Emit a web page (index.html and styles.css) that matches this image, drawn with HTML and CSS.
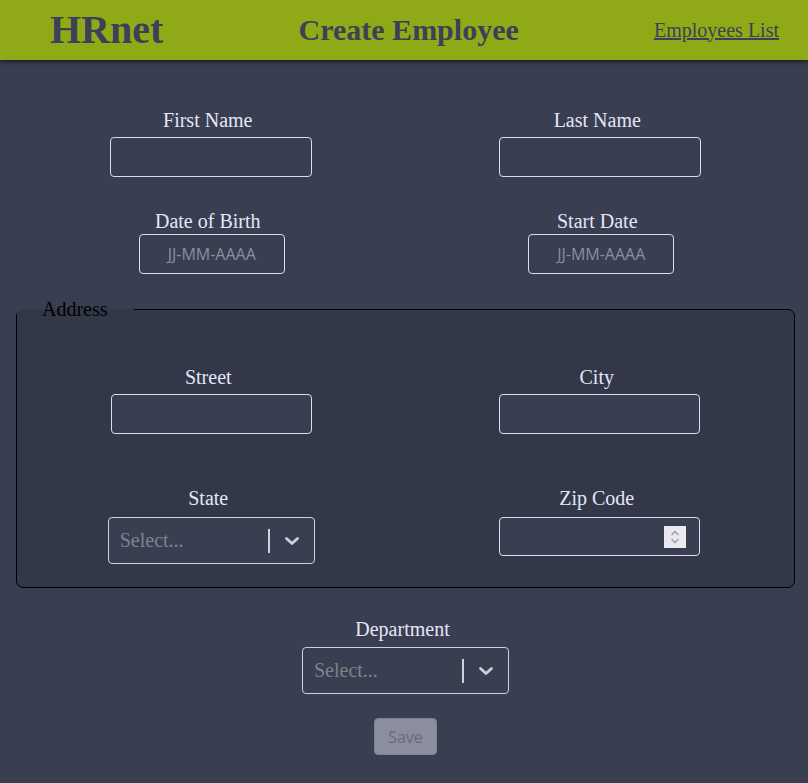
FILE: index.html
```html
<!DOCTYPE html>
<html lang="fr">
<head>
<meta charset="utf-8">
<title>HRnet - Create Employee</title>
<link rel="stylesheet" href="styles.css">
</head>
<body>
<header class="topbar">
  <div class="logo">HRnet</div>
  <h1 class="title">Create Employee</h1>
  <a class="navlink" href="#">Employees List</a>
</header>
<main class="page">
  <form class="form">
    <div class="row row-first">
      <div class="field">
        <label class="label">First Name</label>
        <input class="text-input" type="text">
      </div>
      <div class="field">
        <label class="label">Last Name</label>
        <input class="text-input" type="text">
      </div>
    </div>
    <div class="row row-dates">
      <div class="field field-tight">
        <label class="label">Date of Birth</label>
        <input class="date-input" type="text" placeholder="JJ-MM-AAAA">
      </div>
      <div class="field field-tight">
        <label class="label">Start Date</label>
        <input class="date-input" type="text" placeholder="JJ-MM-AAAA">
      </div>
    </div>
    <fieldset class="address">
      <legend class="legend">Address</legend>
      <div class="row">
        <div class="field">
          <label class="label">Street</label>
          <input class="text-input inner-input" type="text">
        </div>
        <div class="field">
          <label class="label">City</label>
          <input class="text-input inner-input" type="text">
        </div>
      </div>
      <div class="row row-state">
        <div class="field field-select">
          <label class="label">State</label>
          <div class="select">
            <span class="select-placeholder">Select...</span>
            <span class="select-sep"></span>
            <span class="select-arrow"><svg width="16" height="10" viewBox="0 0 16 10"><polyline points="2.5,2.5 8,7.5 13.5,2.5" fill="none" stroke="#cfcfd6" stroke-width="2.8" stroke-linecap="round" stroke-linejoin="round"/></svg></span>
          </div>
        </div>
        <div class="field field-select">
          <label class="label">Zip Code</label>
          <div class="number-box">
            <input class="number-input" type="text">
            <span class="spinner"><svg width="22" height="22" viewBox="0 0 22 22"><polyline points="7.5,9 11,5.5 14.5,9" fill="none" stroke="#9a9aa6" stroke-width="1.3"/><polyline points="7.5,13 11,16.5 14.5,13" fill="none" stroke="#9a9aa6" stroke-width="1.3"/></svg></span>
          </div>
        </div>
      </div>
    </fieldset>
    <div class="field field-dept">
      <label class="label">Department</label>
      <div class="select">
        <span class="select-placeholder">Select...</span>
        <span class="select-sep"></span>
        <span class="select-arrow"><svg width="16" height="10" viewBox="0 0 16 10"><polyline points="2.5,2.5 8,7.5 13.5,2.5" fill="none" stroke="#cfcfd6" stroke-width="2.8" stroke-linecap="round" stroke-linejoin="round"/></svg></span>
      </div>
    </div>
    <div class="actions">
      <button class="save" type="button" disabled>Save</button>
    </div>
  </form>
</main>
</body>
</html>
```

FILE: styles.css
```css
* { box-sizing: border-box; }

html, body {
  margin: 0;
  padding: 0;
}

body {
  background: #393e50;
  font-family: "Liberation Serif", "Times New Roman", serif;
  min-height: 783px;
}

.topbar {
  height: 60px;
  background: #90aa17;
  display: flex;
  align-items: center;
  justify-content: space-between;
  padding: 0 29px 0 50px;
  box-shadow: 0 2px 4px rgba(0, 0, 0, 0.55);
  color: #3d4057;
  position: relative;
}

.logo {
  font-size: 40px;
  font-weight: bold;
  line-height: 46px;
}

.title {
  margin: 0;
  font-size: 30px;
  font-weight: bold;
  line-height: 34px;
}

.navlink {
  color: #3d4057;
  font-size: 20px;
  line-height: 23px;
  text-decoration: underline;
}

.page {
  padding: 49px 13px 28px 16px;
}

.form {
  display: flex;
  flex-direction: column;
}

.row {
  display: grid;
  grid-template-columns: 1fr 1fr;
}

.row-dates {
  margin-top: 33px;
}

.field {
  display: flex;
  flex-direction: column;
  align-items: center;
  gap: 5px;
}

.field-tight {
  gap: 1px;
}

.field-select {
  gap: 7px;
}

.label {
  color: #e4e6fb;
  font-size: 20px;
  line-height: 23px;
  margin-right: 6px;
}

.text-input {
  width: 202px;
  height: 40px;
  border: 1px solid #dcdcec;
  border-radius: 4px;
  background: #393e50;
  color: #e4e6fb;
  font-size: 16px;
  padding: 0 8px;
  outline: none;
}

.inner-input {
  width: 201px;
}

.date-input {
  width: 146px;
  height: 40px;
  margin-left: 2px;
  border: 1px solid #dcdcec;
  border-radius: 4px;
  background: #393e50;
  color: #e4e6fb;
  text-align: center;
  font-family: "Open Sans", "DejaVu Sans", sans-serif;
  font-size: 16px;
  padding: 0 4px;
  outline: none;
}

.date-input::placeholder {
  color: #8b8fa2;
}

.address {
  margin: 24px 0 0 0;
  padding: 45px 0 23px 0;
  border: 1px solid #000;
  border-radius: 7px;
  background: #333848;
  min-width: 0;
}

.legend {
  padding: 0 26px 0 25px;
  color: #000;
  font-size: 20px;
  line-height: 23px;
}

.row-state {
  margin-top: 53px;
}

.select {
  width: 207px;
  height: 47px;
  border: 1px solid #d0d0d8;
  border-radius: 4px;
  background: #393e50;
  display: flex;
  align-items: center;
  padding-left: 11px;
}

.select-placeholder {
  flex: 1;
  color: #7e828b;
  font-size: 20px;
  line-height: 23px;
}

.select-sep {
  width: 2px;
  height: 24px;
  background: #d2d2da;
}

.select-arrow {
  width: 44px;
  height: 100%;
  display: flex;
  align-items: center;
  justify-content: center;
}

.number-box {
  width: 201px;
  height: 39px;
  border: 1px solid #dcdcec;
  border-radius: 4px;
  background: #393e50;
  display: flex;
  align-items: center;
  padding-right: 13px;
}

.number-input {
  flex: 1;
  min-width: 0;
  height: 100%;
  border: none;
  background: transparent;
  outline: none;
  color: #e4e6fb;
  font-size: 16px;
  padding: 0 8px;
}

.spinner {
  width: 22px;
  height: 22px;
  background: #e9e9ef;
  display: flex;
}

.field-dept {
  margin-top: 30px;
  gap: 6px;
}

.actions {
  margin-top: 24px;
  display: flex;
  justify-content: center;
}

.save {
  width: 63px;
  height: 37px;
  background: #8b8e9c;
  border: 1px solid #7f8290;
  border-radius: 4px;
  color: #686c7a;
  font-family: "Open Sans", "DejaVu Sans", sans-serif;
  font-size: 16px;
  padding: 0;
}
```
